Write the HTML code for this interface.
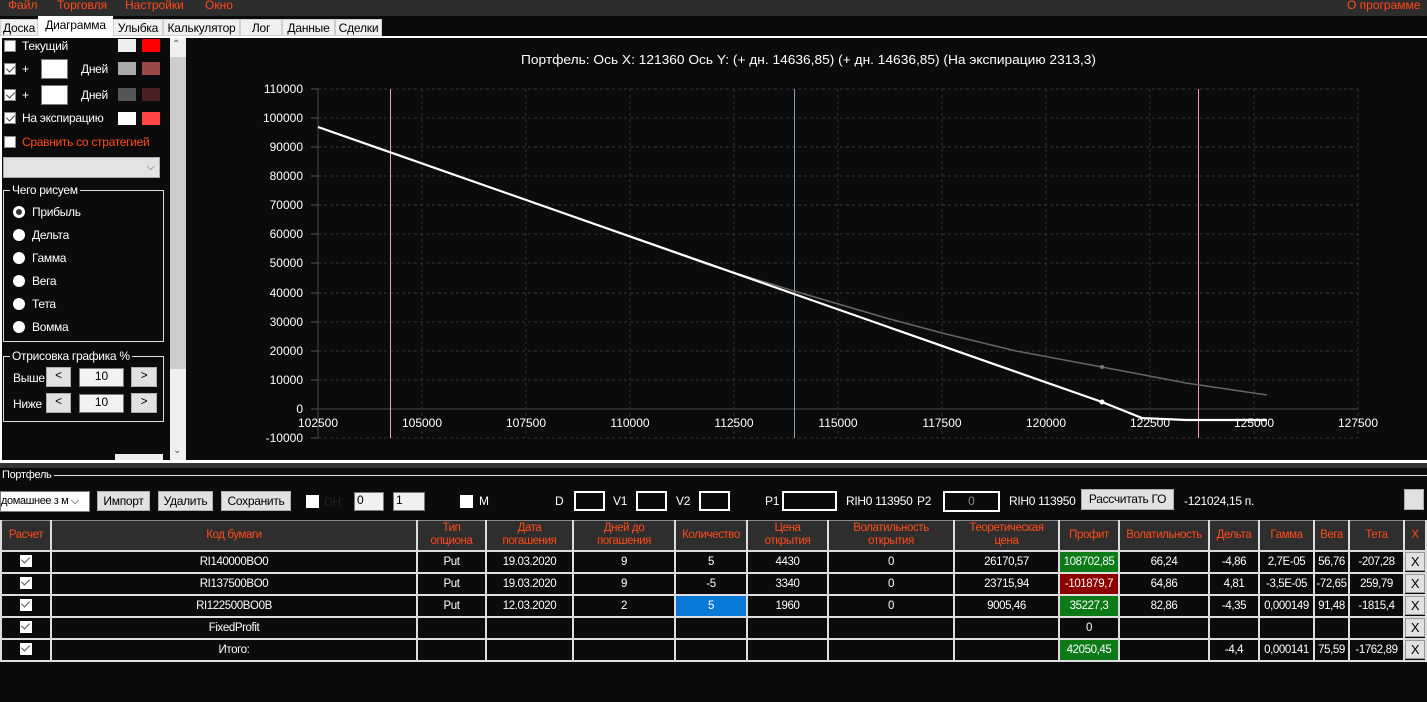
<!DOCTYPE html>
<html><head><meta charset="utf-8"><style>
*{box-sizing:border-box;margin:0;padding:0}
body{width:1427px;height:702px;background:#0b0b0b;font-family:"Liberation Sans",sans-serif;font-size:12px;color:#fff;position:relative;overflow:hidden}
.a{position:absolute}
.menu{left:0;top:0;width:1427px;height:16px;background:#2d2d2d;color:#ff4a1a;font-size:12px}
.menu span{position:absolute;top:-2px}
.tabs{left:0;top:16px;width:1427px;height:20px;background:#0b0b0b}
.tab{position:absolute;top:3px;height:17px;background:#f0f0f0;color:#000;border:1px solid #d0d0d0;font-size:12px;text-align:center;line-height:16px;letter-spacing:-0.2px}
.cb{position:absolute;width:12px;height:12px;background:#fff;border:1px solid #888}
.cb.c::after{content:"";position:absolute;left:3px;top:0px;width:4px;height:7px;border:solid #444;border-width:0 1.5px 1.5px 0;transform:rotate(45deg)}
.sw{position:absolute;width:18px;height:13px}
.lbl{position:absolute;font-size:12px;color:#fff;letter-spacing:-0.3px}
.rad{position:absolute;width:12px;height:12px;border-radius:50%;background:#fff}
.btn{position:absolute;background:#e1e1e1;border:1px solid #adadad;color:#000;font-size:12px;text-align:center;letter-spacing:-0.3px}
.inp{position:absolute;background:#fff;border:1px solid #7a7a7a;color:#000;text-align:center}
.grp{position:absolute;border:1px solid #ddd}
.grp b{position:absolute;top:-8px;left:6px;background:#0b0b0b;font-weight:normal;font-size:12px;letter-spacing:-0.3px;padding:0 2px}
table{position:absolute;left:0;top:520px;border-collapse:collapse;font-family:"Liberation Sans Narrow","Liberation Sans",sans-serif;font-size:11.5px;letter-spacing:-0.4px;table-layout:fixed}
td,th{border:2px solid #ddd;height:22px;text-align:center;padding:0;white-space:nowrap;overflow:hidden}
th{background:#2e2e2e;color:#ff4a1a;font-weight:normal;height:30px;line-height:13px;border-top:1px solid #888}
td.g{background:#0c7a17}td.r{background:#8b0000}td.b{background:#0a78d7}
.x{display:inline-block;width:20px;height:19px;background:#e1e1e1;color:#000;border:1px solid #999;line-height:17px;font-size:13px}
td .k{display:inline-block;width:12px;height:12px;background:#fff;position:relative;vertical-align:middle}
td .k::after{content:"";position:absolute;left:3px;top:0;width:4px;height:7px;border:solid #555;border-width:0 1.5px 1.5px 0;transform:rotate(45deg)}
</style></head><body>
<div class="a menu"><span style="left:8px">Файл</span><span style="left:57px">Торговля</span><span style="left:125px">Настройки</span><span style="left:205px">Окно</span><span style="left:1347px">О программе</span></div>
<div class="a tabs">
<div class="tab" style="left:0;width:38px">Доска</div>
<div class="tab" style="left:38px;top:0;height:20px;width:75px;background:#fff;border-color:#fff">Диаграмма</div>
<div class="tab" style="left:113px;width:50px">Улыбка</div>
<div class="tab" style="left:163px;width:77px">Калькулятор</div>
<div class="tab" style="left:240px;width:42px">Лог</div>
<div class="tab" style="left:282px;width:53px">Данные</div>
<div class="tab" style="left:335px;width:47px">Сделки</div>
</div>
<div class="a" style="left:0;top:36px;width:1427px;height:2px;background:#fff"></div>
<div class="a" style="left:0;top:36px;width:2px;height:426px;background:#fff"></div>
<!-- left panel -->
<div class="cb" style="left:4px;top:40px"></div><div class="lbl" style="left:22px;top:39px">Текущий</div>
<div class="sw" style="left:118px;top:39px;background:#eee"></div><div class="sw" style="left:142px;top:39px;background:#f00"></div>
<div class="cb c" style="left:4px;top:63px"></div><div class="lbl" style="left:22px;top:62px">+</div>
<div class="inp" style="left:41px;top:59px;width:27px;height:20px"></div><div class="lbl" style="left:81px;top:62px">Дней</div>
<div class="sw" style="left:118px;top:62px;background:#aaa"></div><div class="sw" style="left:142px;top:62px;background:#9a4848"></div>
<div class="cb c" style="left:4px;top:89px"></div><div class="lbl" style="left:22px;top:88px">+</div>
<div class="inp" style="left:41px;top:85px;width:27px;height:20px"></div><div class="lbl" style="left:81px;top:88px">Дней</div>
<div class="sw" style="left:118px;top:88px;background:#555"></div><div class="sw" style="left:142px;top:88px;background:#4a2020"></div>
<div class="cb c" style="left:4px;top:112px"></div><div class="lbl" style="left:22px;top:111px">На экспирацию</div>
<div class="sw" style="left:118px;top:112px;background:#fff"></div><div class="sw" style="left:142px;top:112px;background:#f44"></div>
<div class="cb" style="left:4px;top:136px"></div><div class="lbl" style="left:22px;top:135px;color:#ff4a1a">Сравнить со стратегией</div>
<div class="a" style="left:3px;top:157px;width:157px;height:21px;background:#e3e3e3;border:1px solid #aaa;color:#555;text-align:right;padding-right:4px;font-size:11px;line-height:18px">⌵</div>
<div class="grp" style="left:3px;top:190px;width:161px;height:152px"><b>Чего рисуем</b></div>
<div class="rad" style="left:13px;top:206px;border:3px solid #fff;background:#333"></div><div class="lbl" style="left:32px;top:205px">Прибыль</div>
<div class="rad" style="left:13px;top:229px"></div><div class="lbl" style="left:32px;top:228px">Дельта</div>
<div class="rad" style="left:13px;top:252px"></div><div class="lbl" style="left:32px;top:251px">Гамма</div>
<div class="rad" style="left:13px;top:275px"></div><div class="lbl" style="left:32px;top:274px">Вега</div>
<div class="rad" style="left:13px;top:298px"></div><div class="lbl" style="left:32px;top:297px">Тета</div>
<div class="rad" style="left:13px;top:321px"></div><div class="lbl" style="left:32px;top:320px">Вомма</div>
<div class="grp" style="left:3px;top:356px;width:161px;height:66px"><b>Отрисовка графика %</b></div>
<div class="lbl" style="left:13px;top:371px">Выше</div>
<div class="btn" style="left:46px;top:367px;width:25px;height:20px">&lt;</div>
<div class="inp" style="left:79px;top:368px;width:45px;height:19px;background:#f2f2f2;font-size:12px">10</div>
<div class="btn" style="left:131px;top:367px;width:26px;height:20px">&gt;</div>
<div class="lbl" style="left:13px;top:397px">Ниже</div>
<div class="btn" style="left:46px;top:393px;width:25px;height:20px">&lt;</div>
<div class="inp" style="left:79px;top:394px;width:45px;height:19px;background:#f2f2f2;font-size:12px">10</div>
<div class="btn" style="left:131px;top:393px;width:26px;height:20px">&gt;</div>
<div class="a" style="left:115px;top:454px;width:48px;height:8px;background:#eee"></div>
<!-- scrollbar -->
<div class="a" style="left:170px;top:38px;width:16px;height:424px;background:#f0f0f0"></div>
<div class="a" style="left:170px;top:57px;width:16px;height:312px;background:#cdcdcd"></div>
<div class="a" style="left:172px;top:39px;font-size:10px;color:#555">⌃</div>
<div class="a" style="left:173px;top:445px;font-size:10px;color:#555">⌄</div>
<!-- chart -->
<svg class="a" style="left:186px;top:38px" width="1241" height="422">
<text x="335" y="26" fill="#fff" font-size="12.5" textLength="575" lengthAdjust="spacingAndGlyphs" font-family="Liberation Sans,sans-serif">Портфель: Ось X: 121360 Ось Y:  (+ дн. 14636,85)  (+ дн. 14636,85)  (На экспирацию 2313,3)</text>
<g stroke="#333" stroke-dasharray="3,3" stroke-width="1">
<line x1="132" y1="51" x2="1172" y2="51"/><line x1="132" y1="80" x2="1172" y2="80"/><line x1="132" y1="109" x2="1172" y2="109"/><line x1="132" y1="138" x2="1172" y2="138"/><line x1="132" y1="167" x2="1172" y2="167"/><line x1="132" y1="196" x2="1172" y2="196"/><line x1="132" y1="225" x2="1172" y2="225"/><line x1="132" y1="255" x2="1172" y2="255"/><line x1="132" y1="284" x2="1172" y2="284"/><line x1="132" y1="313" x2="1172" y2="313"/><line x1="132" y1="342" x2="1172" y2="342"/><line x1="132" y1="400" x2="1172" y2="400"/>
<line x1="236" y1="51" x2="236" y2="400"/><line x1="340" y1="51" x2="340" y2="400"/><line x1="444" y1="51" x2="444" y2="400"/><line x1="548" y1="51" x2="548" y2="400"/><line x1="652" y1="51" x2="652" y2="400"/><line x1="756" y1="51" x2="756" y2="400"/><line x1="860" y1="51" x2="860" y2="400"/><line x1="964" y1="51" x2="964" y2="400"/><line x1="1068" y1="51" x2="1068" y2="400"/><line x1="1172" y1="51" x2="1172" y2="400"/>
</g>
<line x1="132" y1="51" x2="132" y2="400" stroke="#2a2a2a" stroke-width="2"/>
<line x1="132" y1="371" x2="1172" y2="371" stroke="#2a2a2a" stroke-width="2"/>
<g stroke="#555" stroke-width="1">
<line x1="125" y1="51" x2="132" y2="51"/><line x1="125" y1="80" x2="132" y2="80"/><line x1="125" y1="109" x2="132" y2="109"/><line x1="125" y1="138" x2="132" y2="138"/><line x1="125" y1="167" x2="132" y2="167"/><line x1="125" y1="196" x2="132" y2="196"/><line x1="125" y1="225" x2="132" y2="225"/><line x1="125" y1="255" x2="132" y2="255"/><line x1="125" y1="284" x2="132" y2="284"/><line x1="125" y1="313" x2="132" y2="313"/><line x1="125" y1="342" x2="132" y2="342"/><line x1="125" y1="371" x2="132" y2="371"/><line x1="125" y1="400" x2="132" y2="400"/>
</g>
<g fill="#fff" font-size="12" text-anchor="end" font-family="Liberation Sans,sans-serif">
<text x="117" y="55">110000</text><text x="117" y="84">100000</text><text x="117" y="113">90000</text><text x="117" y="142">80000</text><text x="117" y="171">70000</text><text x="117" y="200">60000</text><text x="117" y="229">50000</text><text x="117" y="259">40000</text><text x="117" y="288">30000</text><text x="117" y="317">20000</text><text x="117" y="346">10000</text><text x="117" y="375">0</text><text x="117" y="404">-10000</text>
</g>
<g fill="#fff" font-size="12" text-anchor="middle" font-family="Liberation Sans,sans-serif">
<text x="132" y="389">102500</text><text x="236" y="389">105000</text><text x="340" y="389">107500</text><text x="444" y="389">110000</text><text x="548" y="389">112500</text><text x="652" y="389">115000</text><text x="756" y="389">117500</text><text x="860" y="389">120000</text><text x="964" y="389">122500</text><text x="1068" y="389">125000</text><text x="1172" y="389">127500</text>
</g>
<rect x="204" y="51" width="1" height="349" fill="#ffa0a8"/>
<rect x="1012" y="51" width="1" height="349" fill="#ffa0a8"/>
<rect x="608" y="51" width="1" height="349" fill="#7f9fc0"/>
<path d="M400 183 L520 226 L608 253 L700 280 L760 296 L830 313 L916 329 L1000 345 L1081 357" stroke="#666" stroke-width="1.5" fill="none"/>
<circle cx="916" cy="329" r="2" fill="#777"/>
<path d="M132 89 L916 364 L956 380 L1000 382 L1081 382" stroke="#fff" stroke-width="2.2" fill="none"/>
<circle cx="916" cy="364" r="2.5" fill="#fff"/>
</svg>
<!-- splitter -->
<div class="a" style="left:0;top:460px;width:1427px;height:3px;background:#fff"></div>
<div class="a" style="left:0;top:463px;width:1427px;height:5px;background:#333"></div>
<div class="a" style="left:0;top:468px;width:1427px;height:2px;background:#0b0b0b"></div>
<div class="lbl" style="left:2px;top:469px;font-size:11px">Портфель</div>
<div class="a" style="left:54px;top:475px;width:1373px;height:1px;background:#ddd"></div>
<!-- toolbar -->
<div class="inp" style="left:0;top:491px;width:90px;height:21px;text-align:left;font-size:11px;line-height:19px;letter-spacing:-0.4px">домашнее з м ⌵</div>
<div class="btn" style="left:97px;top:491px;width:53px;height:20px;line-height:18px">Импорт</div>
<div class="btn" style="left:158px;top:491px;width:55px;height:20px;line-height:18px">Удалить</div>
<div class="btn" style="left:221px;top:491px;width:70px;height:20px;line-height:18px">Сохранить</div>
<div class="a" style="left:306px;top:495px;width:13px;height:13px;background:#fff"></div><div class="lbl" style="left:324px;top:495px;color:#222">DH</div>
<div class="inp" style="left:354px;top:492px;width:30px;height:19px;text-align:left;padding-left:2px;background:#f0f0f0">0</div>
<div class="inp" style="left:393px;top:492px;width:32px;height:19px;text-align:left;padding-left:2px;background:#f0f0f0">1</div>
<div class="a" style="left:460px;top:495px;width:13px;height:13px;background:#fff"></div><div class="lbl" style="left:479px;top:494px">M</div>
<div class="lbl" style="left:555px;top:494px">D</div><div class="a" style="left:574px;top:491px;width:31px;height:20px;border:2px solid #fff"></div>
<div class="lbl" style="left:613px;top:494px">V1</div><div class="a" style="left:636px;top:491px;width:31px;height:20px;border:2px solid #fff"></div>
<div class="lbl" style="left:676px;top:494px">V2</div><div class="a" style="left:699px;top:491px;width:31px;height:20px;border:2px solid #fff"></div>
<div class="lbl" style="left:765px;top:494px">P1</div><div class="a" style="left:782px;top:491px;width:55px;height:20px;border:2px solid #fff"></div>
<div class="lbl" style="left:846px;top:494px">RIH0 113950</div><div class="lbl" style="left:917px;top:494px">P2</div>
<div class="a" style="left:943px;top:491px;width:57px;height:21px;border:2px solid #fff;color:#888;text-align:center;line-height:17px">0</div>
<div class="lbl" style="left:1009px;top:494px">RIH0 113950</div>
<div class="btn" style="left:1081px;top:489px;width:93px;height:21px;line-height:19px">Рассчитать ГО</div>
<div class="lbl" style="left:1184px;top:494px">-121024,15 п.</div>
<div class="btn" style="left:1404px;top:489px;width:20px;height:21px"></div>
<table>
<colgroup><col style="width:50px"><col style="width:366px"><col style="width:69px"><col style="width:87px"><col style="width:102px"><col style="width:72px"><col style="width:81px"><col style="width:126px"><col style="width:105px"><col style="width:60px"><col style="width:90px"><col style="width:50px"><col style="width:55px"><col style="width:35px"><col style="width:55px"><col style="width:22px"></colgroup>
<tr><th>Расчет</th><th>Код бумаги</th><th>Тип<br>опциона</th><th>Дата<br>погашения</th><th>Дней до<br>погашения</th><th>Количество</th><th>Цена<br>открытия</th><th>Волатильность<br>открытия</th><th>Теоретическая<br>цена</th><th>Профит</th><th>Волатильность</th><th>Дельта</th><th>Гамма</th><th>Вега</th><th>Тета</th><th>X</th></tr>
<tr><td><span class="k"></span></td><td>RI140000BO0</td><td>Put</td><td>19.03.2020</td><td>9</td><td>5</td><td>4430</td><td>0</td><td>26170,57</td><td class="g">108702,85</td><td>66,24</td><td>-4,86</td><td>2,7E-05</td><td>56,76</td><td>-207,28</td><td><span class="x">X</span></td></tr>
<tr><td><span class="k"></span></td><td>RI137500BO0</td><td>Put</td><td>19.03.2020</td><td>9</td><td>-5</td><td>3340</td><td>0</td><td>23715,94</td><td class="r">-101879,7</td><td>64,86</td><td>4,81</td><td>-3,5E-05</td><td>-72,65</td><td>259,79</td><td><span class="x">X</span></td></tr>
<tr><td><span class="k"></span></td><td>RI122500BO0B</td><td>Put</td><td>12.03.2020</td><td>2</td><td class="b">5</td><td>1960</td><td>0</td><td>9005,46</td><td class="g">35227,3</td><td>82,86</td><td>-4,35</td><td>0,000149</td><td>91,48</td><td>-1815,4</td><td><span class="x">X</span></td></tr>
<tr><td><span class="k"></span></td><td>FixedProfit</td><td></td><td></td><td></td><td></td><td></td><td></td><td></td><td>0</td><td></td><td></td><td></td><td></td><td></td><td><span class="x">X</span></td></tr>
<tr><td><span class="k"></span></td><td>Итого:</td><td></td><td></td><td></td><td></td><td></td><td></td><td></td><td class="g">42050,45</td><td></td><td>-4,4</td><td>0,000141</td><td>75,59</td><td>-1762,89</td><td><span class="x">X</span></td></tr>
</table>
</body></html>
